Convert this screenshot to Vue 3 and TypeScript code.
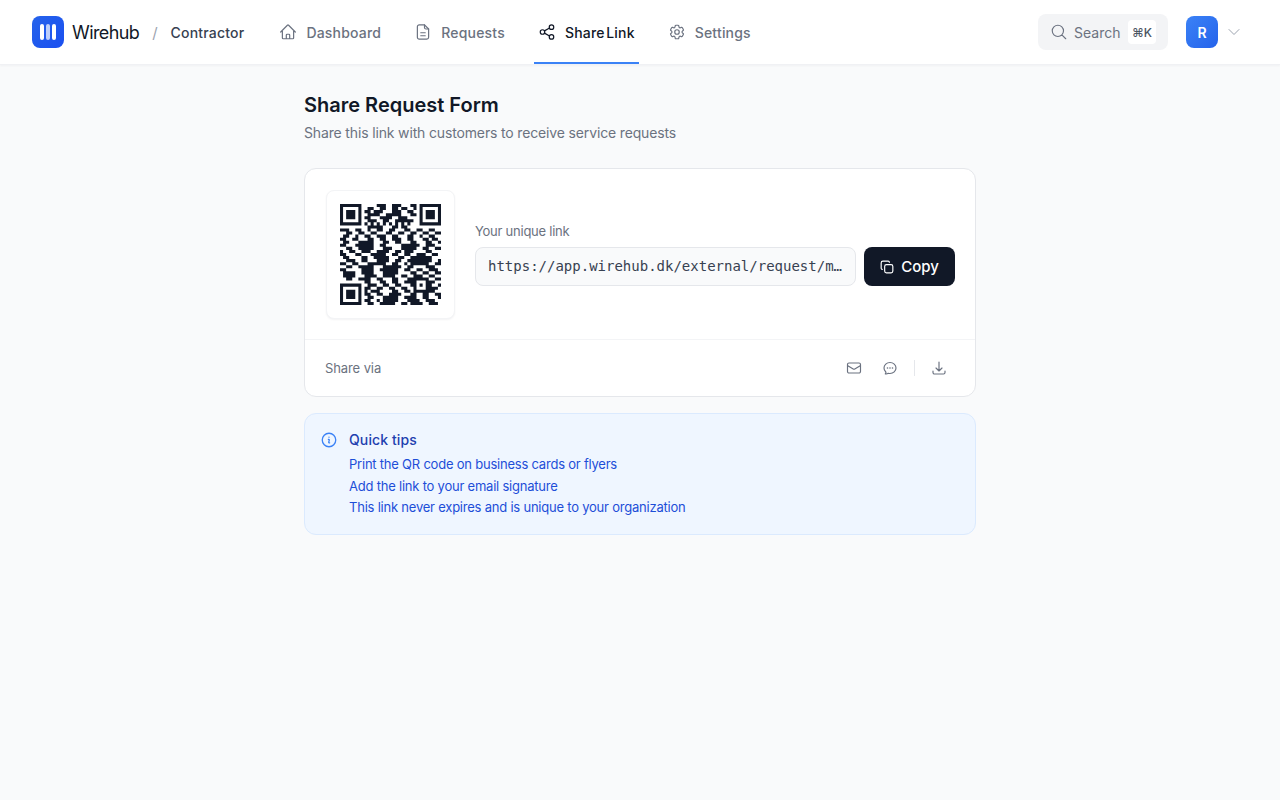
<script setup lang="ts">
interface NavItem {
  label: string;
  paths: string[];
  active?: boolean;
}

const navItems: NavItem[] = [
  {
    label: 'Dashboard',
    paths: [
      'm2.25 12 8.954-8.955c.44-.439 1.152-.439 1.591 0L21.75 12M4.5 9.75v10.125c0 .621.504 1.125 1.125 1.125H9.75v-4.875c0-.621.504-1.125 1.125-1.125h2.25c.621 0 1.125.504 1.125 1.125V21h4.125c.621 0 1.125-.504 1.125-1.125V9.75M8.25 21h8.25',
    ],
  },
  {
    label: 'Requests',
    paths: [
      'M14 2.5H7a2.5 2.5 0 0 0-2.5 2.5v14A2.5 2.5 0 0 0 7 21.5h10a2.5 2.5 0 0 0 2.5-2.5V8Z',
      'M14 2.5V6a2 2 0 0 0 2 2h3.5',
      'M9 13h6M9 17h6',
    ],
  },
  {
    label: 'Share Link',
    active: true,
    paths: [
      'M8.6 10.5l6.8-3.9M8.6 13.5l6.8 3.9',
      'M21 5.5a3 3 0 1 1-6 0 3 3 0 0 1 6 0Z',
      'M9 12a3 3 0 1 1-6 0 3 3 0 0 1 6 0Z',
      'M21 18.5a3 3 0 1 1-6 0 3 3 0 0 1 6 0Z',
    ],
  },
  {
    label: 'Settings',
    paths: [
      'M9.594 3.94c.09-.542.56-.94 1.11-.94h2.593c.55 0 1.02.398 1.11.94l.213 1.281c.063.374.313.686.645.87.074.04.147.083.22.127.325.196.72.257 1.075.124l1.217-.456a1.125 1.125 0 0 1 1.37.49l1.296 2.247a1.125 1.125 0 0 1-.26 1.431l-1.003.827c-.293.241-.438.613-.43.992a7.723 7.723 0 0 1 0 .255c-.008.378.137.75.43.991l1.004.827c.424.35.534.955.26 1.43l-1.298 2.247a1.125 1.125 0 0 1-1.369.491l-1.217-.456c-.355-.133-.75-.072-1.076.124a6.47 6.47 0 0 1-.22.128c-.331.183-.581.495-.644.869l-.213 1.281c-.09.543-.56.94-1.11.94h-2.594c-.55 0-1.019-.398-1.11-.94l-.213-1.281c-.062-.374-.312-.686-.644-.87a6.52 6.52 0 0 1-.22-.127c-.325-.196-.72-.257-1.076-.124l-1.217.456a1.125 1.125 0 0 1-1.369-.49l-1.297-2.247a1.125 1.125 0 0 1 .26-1.431l1.004-.827c.292-.24.437-.613.43-.991a6.932 6.932 0 0 1 0-.255c.007-.38-.138-.751-.43-.992l-1.004-.827a1.125 1.125 0 0 1-.26-1.43l1.297-2.247a1.125 1.125 0 0 1 1.37-.491l1.216.456c.356.133.751.072 1.076-.124.072-.044.146-.086.22-.128.332-.183.582-.495.644-.869l.214-1.28Z',
      'M15 12a3 3 0 1 1-6 0 3 3 0 0 1 6 0Z',
    ],
  },
];

const tips: string[] = [
  'Print the QR code on business cards or flyers',
  'Add the link to your email signature',
  'This link never expires and is unique to your organization',
];

const qrRows: string[] = [
  '000000000000111001110001100000000',
  '000000000110011001101100100000000',
  '000000001101110001110011000000000',
  '000000000111100111110001100000000',
  '000000001100011110011100000000000',
  '000000000111001100111111000000000',
  '000000001010101010101010000000000',
  '000000000111110001101100000000000',
  '111001100100110011000110011001100',
  '001100110011000110011001100110011',
  '011001001100111001100011001001100',
  '110011000110011001110011000110110',
  '011000111110001100110001100011001',
  '110001111110011000001111110011100',
  '001100111110001110001111100110011',
  '100110011100111100110111000011000',
  '110001100011111001100110011100110',
  '011000011001111100011001111111000',
  '001110011000111100110011111111001',
  '110011000111111001100101111110011',
  '001100111110001111110011000011100',
  '110000011110011111100110011001110',
  '011110011110001111100001100110011',
  '011110001111001111001100111001100',
  '001100111100110001100011001110011',
  '000000001100011001100111111001100',
  '000000000111001100110001111111001',
  '000000001100110011001100011111110',
  '000000001011100001100110011001100',
  '000000001100110011110001100110011',
  '000000000110001111100111100110001',
  '000000001100101111100011110011100',
  '000000000110011111001101111001110',
];

function finderCell(r: number, c: number): boolean {
  return r === 0 || r === 6 || c === 0 || c === 6 || (r >= 2 && r <= 4 && c >= 2 && c <= 4);
}

function isDark(r: number, c: number): boolean {
  if (r < 8 && c < 8) return r < 7 && c < 7 && finderCell(r, c);
  if (r < 8 && c > 24) return r < 7 && c > 25 && finderCell(r, c - 26);
  if (r > 24 && c < 8) return r > 25 && c < 7 && finderCell(r - 26, c);
  if (r >= 24 && r <= 28 && c >= 24 && c <= 28) {
    return r === 24 || r === 28 || c === 24 || c === 28 || (r === 26 && c === 26);
  }
  return qrRows[r][c] === '1';
}

function qrPath(): string {
  let d = '';
  for (let r = 0; r < 33; r++) {
    for (let c = 0; c < 33; c++) {
      if (isDark(r, c)) d += `M${c} ${r}h1v1h-1z`;
    }
  }
  return d;
}
</script>

<template>
  <div class="page">
    <header class="topbar">
      <div class="brand">
        <div class="logo">
          <span class="bar" />
          <span class="bar bar-mid" />
          <span class="bar" />
        </div>
        <span class="brand-name">Wirehub</span>
        <span class="slash">/</span>
        <span class="role">Contractor</span>
      </div>

      <nav class="nav">
        <a v-for="item in navItems" :key="item.label" class="nav-item" :class="{ active: item.active }">
          <svg class="nav-icon" viewBox="0 0 24 24" fill="none" stroke="currentColor" stroke-width="1.6" stroke-linecap="round" stroke-linejoin="round">
            <path v-for="d in item.paths" :key="d" :d="d" />
          </svg>
          {{ item.label }}
        </a>
      </nav>

      <div class="topbar-right">
        <div class="search">
          <svg class="search-icon" viewBox="0 0 24 24" fill="none" stroke="currentColor" stroke-width="1.5" stroke-linecap="round" stroke-linejoin="round">
            <path d="m21 21-5.197-5.197m0 0A7.5 7.5 0 1 0 5.196 5.196a7.5 7.5 0 0 0 10.607 10.607Z" />
          </svg>
          <span>Search</span>
          <kbd class="kbd">⌘K</kbd>
        </div>
        <div class="avatar">R</div>
        <svg class="chevron" viewBox="0 0 24 24" fill="none" stroke="currentColor" stroke-width="1.5" stroke-linecap="round" stroke-linejoin="round">
          <path d="m19.5 8.25-7.5 7.5-7.5-7.5" />
        </svg>
      </div>
    </header>

    <main class="content">
      <h1 class="title">Share Request Form</h1>
      <p class="subtitle">Share this link with customers to receive service requests</p>

      <section class="card">
        <div class="card-main">
          <div class="qr-tile">
            <svg class="qr" viewBox="0 0 33 33">
              <path :d="qrPath()" fill="#111827" />
            </svg>
          </div>
          <div class="link-block">
            <label class="link-label">Your unique link</label>
            <div class="link-row">
              <div class="link-input">https://app.wirehub.dk/external/request/m8f3k2x9q1</div>
              <button class="copy-btn">
                <svg class="copy-icon" viewBox="0 0 24 24" fill="none" stroke="currentColor" stroke-width="2" stroke-linecap="round" stroke-linejoin="round">
                  <rect x="8" y="8" width="14" height="14" rx="3" />
                  <path d="M4 16c-1.1 0-2-.9-2-2V5c0-1.7 1.3-3 3-3h9c1.1 0 2 .9 2 2" />
                </svg>
                Copy
              </button>
            </div>
          </div>
        </div>
        <div class="card-foot">
          <span class="share-via">Share via</span>
          <div class="share-actions">
            <svg class="action-icon" viewBox="0 0 24 24" fill="none" stroke="currentColor" stroke-width="1.75" stroke-linecap="round" stroke-linejoin="round">
              <path d="M21.75 6.75v10.5a2.25 2.25 0 0 1-2.25 2.25h-15a2.25 2.25 0 0 1-2.25-2.25V6.75m19.5 0A2.25 2.25 0 0 0 19.5 4.5h-15a2.25 2.25 0 0 0-2.25 2.25m19.5 0v.243a2.25 2.25 0 0 1-1.07 1.916l-7.5 4.615a2.25 2.25 0 0 1-2.36 0L3.32 8.91a2.25 2.25 0 0 1-1.07-1.916V6.75" />
            </svg>
            <svg class="action-icon" viewBox="0 0 24 24" fill="none" stroke="currentColor" stroke-width="1.75" stroke-linecap="round" stroke-linejoin="round">
              <path d="M8.625 12a.375.375 0 1 1-.75 0 .375.375 0 0 1 .75 0Zm0 0H8.25m4.125 0a.375.375 0 1 1-.75 0 .375.375 0 0 1 .75 0Zm0 0H12m4.125 0a.375.375 0 1 1-.75 0 .375.375 0 0 1 .75 0Zm0 0h-.375M21 12c0 4.556-4.03 8.25-9 8.25a9.764 9.764 0 0 1-2.555-.337A5.972 5.972 0 0 1 5.41 20.97a5.969 5.969 0 0 1-.474-.065 4.48 4.48 0 0 0 .978-2.025c.09-.457-.133-.901-.467-1.226C3.93 16.178 3 14.189 3 12c0-4.556 4.03-8.25 9-8.25s9 3.694 9 8.25Z" />
            </svg>
            <span class="action-sep" />
            <svg class="action-icon" viewBox="0 0 24 24" fill="none" stroke="currentColor" stroke-width="1.75" stroke-linecap="round" stroke-linejoin="round">
              <path d="M3 16.5v2.25A2.25 2.25 0 0 0 5.25 21h13.5A2.25 2.25 0 0 0 21 18.75V16.5M16.5 12 12 16.5m0 0L7.5 12m4.5 4.5V3" />
            </svg>
          </div>
        </div>
      </section>

      <section class="tips">
        <svg class="tips-icon" viewBox="0 0 24 24" fill="none" stroke="currentColor" stroke-width="1.75" stroke-linecap="round" stroke-linejoin="round">
          <path d="m11.25 11.25.041-.02a.75.75 0 0 1 1.063.852l-.708 2.836a.75.75 0 0 0 1.063.853l.041-.021M21 12a9 9 0 1 1-18 0 9 9 0 0 1 18 0Zm-9-3.75h.008v.008H12V8.25Z" />
        </svg>
        <div>
          <h2 class="tips-title">Quick tips</h2>
          <ul class="tips-list">
            <li v-for="tip in tips" :key="tip">{{ tip }}</li>
          </ul>
        </div>
      </section>
    </main>
  </div>
</template>

<style>
html,
body {
  background: #f9fafb;
}
</style>

<style scoped>
.page {
  min-height: 800px;
  background: #f9fafb;
  font-family: Inter, 'Noto Sans', sans-serif;
  color: #111827;
}

.topbar {
  display: flex;
  align-items: center;
  height: 64px;
  padding: 0 38px 0 32px;
  background: #fff;
  border-bottom: 1px solid #f0f1f4;
  box-shadow: 0 1px 2px rgba(17, 24, 39, 0.04);
}

.brand {
  display: flex;
  align-items: center;
}

.logo {
  display: flex;
  justify-content: center;
  align-items: center;
  gap: 2px;
  width: 32px;
  height: 32px;
  border-radius: 8px;
  background: linear-gradient(135deg, #2563eb, #1a4ff0);
}

.bar {
  width: 4px;
  height: 16px;
  border-radius: 2px;
  background: #fff;
}

.bar-mid {
  opacity: 0.7;
}

.brand-name {
  margin-left: 8px;
  font-size: 18px;
  letter-spacing: -0.6px;
}

.slash {
  margin: 0 13px 0 13px;
  font-size: 15px;
  color: #9ca3af;
}

.role {
  font-size: 14px;
  font-weight: 500;
  letter-spacing: 0.2px;
  color: #374151;
}

.nav {
  display: flex;
  gap: 25px;
  margin-left: 31px;
  align-self: stretch;
}

.nav-item {
  display: flex;
  align-items: center;
  gap: 9px;
  padding: 2px 4px 0;
  height: 64px;
  box-sizing: border-box;
  border-bottom: 2px solid transparent;
  font-size: 14px;
  font-weight: 500;
  letter-spacing: 0.2px;
  word-spacing: -2.5px;
  color: #6b7280;
}

.nav-item.active {
  color: #111827;
  border-bottom-color: #3b82f6;
}

.nav-icon {
  width: 18px;
  height: 18px;
}

.topbar-right {
  display: flex;
  align-items: center;
  margin-left: auto;
}

.search {
  display: flex;
  align-items: center;
  width: 130px;
  height: 36px;
  box-sizing: border-box;
  padding: 0 12px;
  border-radius: 8px;
  background: #f3f4f6;
  font-size: 14px;
  color: #6b7280;
}

.search-icon {
  width: 18px;
  height: 18px;
  margin-right: 6px;
}

.kbd {
  display: flex;
  justify-content: center;
  align-items: center;
  width: 28px;
  height: 24px;
  margin-left: auto;
  border-radius: 4px;
  background: #fff;
  font-family: Inter, sans-serif;
  font-size: 12px;
  font-weight: 500;
  color: #4b5563;
}

.avatar {
  display: flex;
  justify-content: center;
  align-items: center;
  width: 32px;
  height: 32px;
  margin-left: 18px;
  border-radius: 8px;
  background: linear-gradient(135deg, #3b82f6, #2563eb);
  color: #fff;
  font-size: 14px;
  font-weight: 600;
}

.chevron {
  width: 16px;
  height: 16px;
  margin-left: 8px;
  color: #9ca3af;
}

.content {
  width: 672px;
  margin: 0 auto;
  padding-top: 27px;
}

.title {
  margin: 0;
  font-size: 20px;
  line-height: 26px;
  font-weight: 600;
}

.subtitle {
  margin: 5px 0 0;
  font-size: 14px;
  line-height: 20px;
  letter-spacing: -0.15px;
  color: #6b7280;
}

.card {
  margin-top: 25px;
  border: 1px solid #e5e7eb;
  border-radius: 12px;
  background: #fff;
}

.card-main {
  display: flex;
  align-items: center;
  gap: 20px;
  padding: 21px 20px 20px 21px;
}

.qr-tile {
  display: flex;
  justify-content: center;
  align-items: center;
  width: 129px;
  height: 129px;
  box-sizing: border-box;
  border: 1px solid #f3f4f6;
  border-radius: 8px;
  background: #fff;
  box-shadow: 0 1px 2px rgba(17, 24, 39, 0.05);
}

.qr {
  width: 101px;
  height: 101px;
}

.link-block {
  flex: 1;
  min-width: 0;
}

.link-label {
  display: block;
  margin-bottom: 8px;
  font-size: 13px;
  line-height: 16px;
  letter-spacing: -0.25px;
  color: #6b7280;
}

.link-row {
  display: flex;
  gap: 8px;
}

.link-input {
  flex: 1;
  min-width: 0;
  height: 39px;
  box-sizing: border-box;
  padding: 0 12px;
  border: 1px solid #e5e7eb;
  border-radius: 8px;
  background: #f9fafb;
  font-family: 'DejaVu Sans Mono', 'Liberation Mono', monospace;
  font-size: 14px;
  line-height: 37px;
  color: #374151;
  white-space: nowrap;
  overflow: hidden;
  text-overflow: ellipsis;
}

.copy-btn {
  display: flex;
  align-items: center;
  justify-content: center;
  gap: 7px;
  flex: none;
  width: 91px;
  height: 39px;
  border: none;
  border-radius: 8px;
  background: #111827;
  color: #fff;
  font-family: inherit;
  font-size: 15px;
  font-weight: 500;
}

.copy-icon {
  width: 14px;
  height: 14px;
}

.card-foot {
  display: flex;
  align-items: center;
  justify-content: space-between;
  height: 56px;
  padding: 0 28px 0 20px;
  border-top: 1px solid #f3f4f6;
}

.share-via {
  font-size: 13px;
  letter-spacing: -0.1px;
  color: #6b7280;
}

.share-actions {
  display: flex;
  align-items: center;
  color: #6b7280;
}

.action-icon {
  width: 16px;
  height: 16px;
}

.action-icon + .action-icon {
  margin-left: 20px;
}

.action-sep {
  width: 1px;
  height: 16px;
  margin: 0 16px;
  background: #e5e7eb;
}

.tips {
  display: flex;
  gap: 11px;
  margin-top: 16px;
  padding: 16px 18px 15px 15px;
  border: 1px solid #dbeafe;
  border-radius: 12px;
  background: #eff6ff;
}

.tips-icon {
  flex: none;
  width: 18px;
  height: 18px;
  margin-top: 1px;
  color: #3b82f6;
}

.tips-title {
  margin: 0;
  font-size: 14px;
  line-height: 20px;
  font-weight: 500;
  letter-spacing: 0.1px;
  color: #1e40af;
}

.tips-list {
  margin: 4px 0 0;
  padding: 0;
  list-style: none;
  font-size: 13px;
  line-height: 21.5px;
  letter-spacing: -0.22px;
  color: #1d4ed8;
}
</style>
